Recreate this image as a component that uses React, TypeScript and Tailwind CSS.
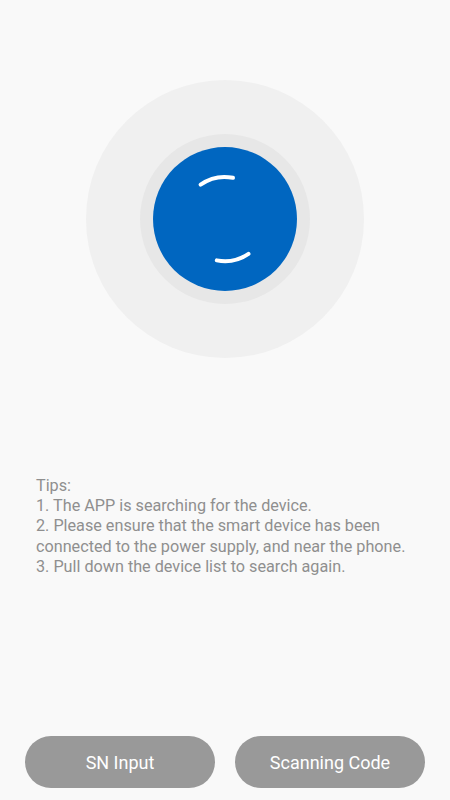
import React from 'react';

const tips = [
  'Tips:',
  '1. The APP is searching for the device.',
  '2. Please ensure that the smart device has been connected to the power supply, and near the phone.',
  '3. Pull down the device list to search again.',
];

// two short white arcs on the blue disc, like a spinner
const SpinnerArcs: React.FC = () => (
  <svg width="144" height="144" viewBox="0 0 144 144" className="absolute inset-0">
    <path d="M47.6 37.6 A42 42 0 0 1 80 30.8" fill="none" stroke="#fff" strokeWidth="4" strokeLinecap="round" />
    <path d="M63.8 113.4 A42 42 0 0 0 95.5 106.8" fill="none" stroke="#fff" strokeWidth="4" strokeLinecap="round" />
  </svg>
);

const App: React.FC = () => {
  return (
    <div className="flex h-[800px] w-[450px] flex-col bg-[#f9f9f9] font-['Roboto','Noto_Sans',sans-serif]">
      <div className="flex justify-center pt-[80px]">
        <div className="flex h-[278px] w-[278px] items-center justify-center rounded-full bg-[#f0f0f0]">
          <div className="flex h-[170px] w-[170px] items-center justify-center rounded-full bg-[#e7e7e7]">
            <div className="relative h-[144px] w-[144px] rounded-full bg-[#0066c0]">
              <SpinnerArcs />
            </div>
          </div>
        </div>
      </div>

      <div className="mt-[118px] px-9 text-[16.2px] leading-[20.2px] text-[#8f8f8f]">
        {tips.map((t) => (
          <p key={t}>{t}</p>
        ))}
      </div>

      <div className="mt-auto mb-3 flex gap-5 px-[25px]">
        <button className="h-[52px] flex-1 rounded-full bg-[#999999] text-[18px] text-white">SN Input</button>
        <button className="h-[52px] flex-1 rounded-full bg-[#999999] text-[18px] text-white">Scanning Code</button>
      </div>
    </div>
  );
};

export default App;
